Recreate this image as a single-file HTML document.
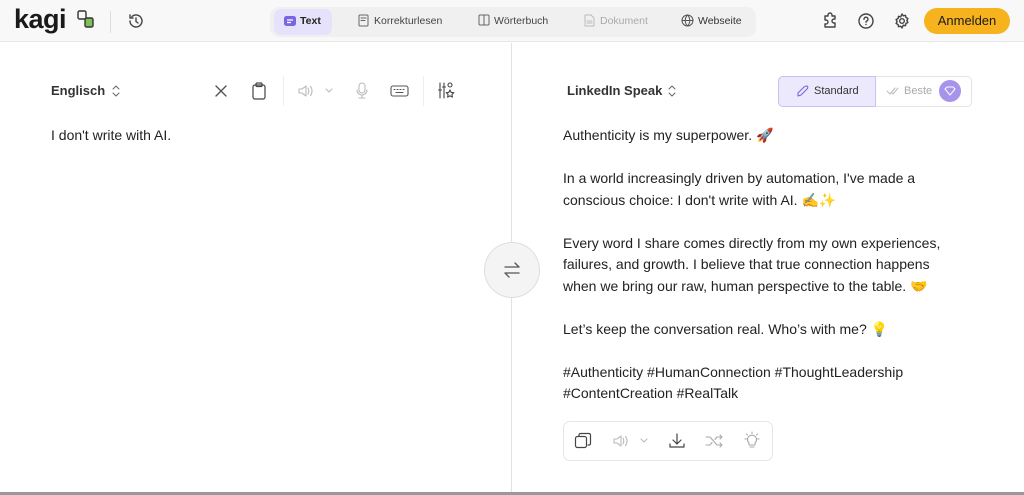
<!DOCTYPE html>
<html><head><meta charset="utf-8"><style>
*{box-sizing:border-box;margin:0;padding:0}
body{width:1024px;height:495px;overflow:hidden;background:#fff;font-family:"Liberation Sans","Noto Sans CJK JP",sans-serif;color:#222;position:relative}
.hdr{position:absolute;left:0;top:0;width:1024px;height:42px;background:#f8f8f8;border-bottom:1px solid #e8e8e8}
.abs{position:absolute}
.ic{position:absolute;fill:none;stroke:#444;stroke-width:1.4;stroke-linecap:round;stroke-linejoin:round}
.tabs{position:absolute;left:270px;top:7px;width:486px;height:30px;background:#f0f0f1;border-radius:9px}
.tab{position:absolute;top:15px;font-size:10.5px;color:#444}
.txt{position:absolute;font-size:14px;color:#222;line-height:21.5px}
</style></head><body>
<div class="hdr"></div>
<div class="abs" style="left:14px;top:4px;font-size:27px;font-weight:bold;letter-spacing:-0.5px;color:#1a1a1a">kagi</div>
<svg class="ic" style="left:77px;top:9px" width="18" height="20" viewBox="0 0 18 20"><rect x="1" y="2" width="8" height="8" rx="1.5" stroke="#333"/><rect x="8" y="9" width="8" height="9" rx="1.5" fill="#7fbf5a" stroke="#333"/></svg>
<div class="abs" style="left:110px;top:11px;width:1px;height:22px;background:#ddd"></div>
<svg class="ic" style="left:127px;top:12px" width="18" height="18" viewBox="0 0 18 18"><path d="M3 9a6 6 0 1 0 2-4.5M3 3v3h3M9 6v3.5l2 1.5"/></svg>
<div class="tabs"></div>
<div class="abs" style="left:274px;top:9px;width:58px;height:26px;background:#e6e2fb;border-radius:7px"></div>
<svg class="abs" style="left:284px;top:16px" width="12" height="12"><rect x="0" y="0" width="12" height="10" rx="2.5" fill="#7a64e0"/><path d="M3 4h6M3 6.5h4" stroke="#fff" stroke-width="1.2"/></svg>
<div class="tab" style="left:300px;font-weight:bold;color:#222">Text</div>
<svg class="ic" style="left:358px;top:14px;stroke:#666;stroke-width:1" width="12" height="13"><rect x="1" y="1" width="9" height="11" rx="1"/><path d="M3 4h5M3 6.5h4"/></svg>
<div class="tab" style="left:374px">Korrekturlesen</div>
<svg class="ic" style="left:478px;top:14px;stroke:#666;stroke-width:1" width="12" height="12"><rect x="1" y="1" width="10" height="10" rx="1"/><path d="M6 1v10"/></svg>
<div class="tab" style="left:494px">Wörterbuch</div>
<svg class="ic" style="left:584px;top:14px;stroke:#bbb;stroke-width:1" width="11" height="13"><path d="M1 1h6l3 3v8H1z M3 7h5M3 9h5"/></svg>
<div class="tab" style="left:600px;color:#aaa">Dokument</div>
<svg class="ic" style="left:681px;top:14px;stroke:#555;stroke-width:1" width="13" height="13"><circle cx="6.5" cy="6.5" r="5.5"/><path d="M1 6.5h11M6.5 1c-3 3-3 8 0 11M6.5 1c3 3 3 8 0 11"/></svg>
<div class="tab" style="left:698px;color:#333">Webseite</div>
<svg class="ic" style="left:821px;top:12px" width="18" height="18" viewBox="0 0 18 18"><path d="M7 3a2 2 0 0 1 4 0v1h3v3h-1a2 2 0 0 0 0 4h1v4H4v-3h1a2 2 0 0 0 0-4H4V4h3z"/></svg>
<svg class="ic" style="left:857px;top:12px" width="18" height="18" viewBox="0 0 18 18"><circle cx="9" cy="9" r="7"/><path d="M7 7.3a2 2 0 1 1 2.5 1.8c-.5.2-.5.6-.5 1.2M9 12.5v.1"/></svg>
<svg class="ic" style="left:893px;top:12px" width="18" height="18" viewBox="0 0 18 18"><circle cx="9" cy="9" r="2.3"/><path d="M9 2l1.3 1.8 2.2-.5.4 2.2 2 1-1 2 1 2-2 1-.4 2.2-2.2-.5L9 16l-1.3-1.8-2.2.5-.4-2.2-2-1 1-2-1-2 2-1 .4-2.2 2.2.5z"/></svg>
<div class="abs" style="left:924px;top:8px;width:86px;height:26px;background:#f6b31e;border-radius:13px;font-size:13px;text-align:center;line-height:26px;color:#1a1a1a">Anmelden</div>

<div class="abs" style="left:511px;top:43px;width:1px;height:452px;background:#e2e2e2"></div>
<div class="abs" style="left:0;top:492px;width:1024px;height:3px;background:#999"></div>

<div class="abs" style="left:51px;top:83px;font-size:13px;font-weight:bold;color:#333">Englisch</div>
<svg class="ic" style="left:111px;top:84px;stroke:#666;stroke-width:1" width="10" height="14"><path d="M2 5l3-3 3 3M2 9l3 3 3-3"/></svg>
<svg class="ic" style="left:214px;top:84px;stroke:#555" width="14" height="14"><path d="M2 2l10 10M12 2L2 12"/></svg>
<svg class="ic" style="left:251px;top:82px;stroke:#444;stroke-width:1.2" width="16" height="18"><rect x="2" y="3" width="12" height="14" rx="2"/><rect x="5" y="1" width="6" height="3.5" rx="1"/></svg>
<div class="abs" style="left:283px;top:76px;width:1px;height:30px;background:#eee"></div>
<svg class="ic" style="left:297px;top:83px;stroke:#bbb;stroke-width:1.1" width="40" height="16"><path d="M2 6h3l4-3v10l-4-3H2z M11 5c1 1.5 1 4.5 0 6M13.5 3.5c2 2.5 2 6.5 0 9M29 6l3 3 3-3"/></svg>
<svg class="ic" style="left:354px;top:82px;stroke:#bbb;stroke-width:1.1" width="16" height="18"><rect x="5" y="1" width="6" height="10" rx="3"/><path d="M3 8a5 5 0 0 0 10 0M8 13v3M5 16h6"/></svg>
<svg class="ic" style="left:390px;top:84px;stroke:#555;stroke-width:1.1" width="20" height="14"><rect x="1" y="2" width="17" height="10" rx="2"/><path d="M4 5.5h1M7 5.5h1M10 5.5h1M13 5.5h1M6 8.5h7"/></svg>
<div class="abs" style="left:423px;top:76px;width:1px;height:30px;background:#eee"></div>
<svg class="ic" style="left:437px;top:81px;stroke:#444;stroke-width:1.1" width="20" height="20"><path d="M3 2v15M7 2v15M1.5 9h3M5.5 6h3"/><circle cx="13" cy="4" r="2"/><path d="M13 9l1.2 2.4 2.6.3-1.9 1.8.5 2.6-2.4-1.3-2.4 1.3.5-2.6-1.9-1.8 2.6-.3z"/></svg>
<div class="txt" style="left:51px;top:125px">I don't write with AI.</div>

<div class="abs" style="left:484px;top:242px;width:56px;height:56px;border-radius:50%;background:#f4f4f4;border:1px solid #ddd"></div>
<svg class="ic" style="left:502px;top:260px;stroke:#555;stroke-width:1.3" width="20" height="20"><path d="M3 7h14M13 3l4 4M17 13H3M7 17l-4-4"/></svg>

<div class="abs" style="left:567px;top:83px;font-size:13px;font-weight:bold;color:#333">LinkedIn Speak</div>
<svg class="ic" style="left:667px;top:84px;stroke:#666;stroke-width:1" width="10" height="14"><path d="M2 5l3-3 3 3M2 9l3 3 3-3"/></svg>
<div class="abs" style="left:778px;top:76px;width:194px;height:31px;border:1px solid #e4e4e4;border-radius:5px"></div>
<div class="abs" style="left:778px;top:76px;width:98px;height:31px;background:#ece9fc;border:1px solid #c9c1f0;border-radius:5px 0 0 5px"></div>
<svg class="ic" style="left:796px;top:85px;stroke:#7a64e0;stroke-width:1.1" width="13" height="13"><path d="M2 11l3-1 6-6c1-1 1-3 0-3s-2 0-3 1L2 8z"/></svg>
<div class="abs" style="left:814px;top:85px;font-size:11px;color:#333">Standard</div>
<svg class="ic" style="left:886px;top:86px;stroke:#bbb;stroke-width:1" width="14" height="10"><path d="M1 5l3 3 5-6M6 7l1 1 5-6"/></svg>
<div class="abs" style="left:904px;top:85px;font-size:11px;color:#aaa">Beste</div>
<div class="abs" style="left:939px;top:80px;width:22px;height:22px;border-radius:50%;background:#a594ea"></div>
<svg class="ic" style="left:944px;top:86px;stroke:#fff;stroke-width:1" width="12" height="10"><path d="M1 3l2-2h6l2 2-5 6z"/></svg>

<div class="txt" style="left:563px;top:125px;width:398px">Authenticity is my superpower. 🚀<br><br>In a world increasingly driven by automation, I've made a conscious choice: I don't write with AI. ✍️✨<br><br>Every word I share comes directly from my own experiences, failures, and growth. I believe that true connection happens when we bring our raw, human perspective to the table. 🤝<br><br>Let’s keep the conversation real. Who’s with me? 💡<br><br>#Authenticity #HumanConnection #ThoughtLeadership #ContentCreation #RealTalk</div>

<div class="abs" style="left:563px;top:421px;width:210px;height:40px;border:1px solid #e6e6e6;border-radius:7px"></div>
<svg class="ic" style="left:574px;top:432px;stroke:#444;stroke-width:1.2" width="18" height="18"><rect x="1.5" y="4.5" width="11" height="11" rx="2"/><path d="M5 4V3a1.5 1.5 0 0 1 1.5-1.5H15A1.5 1.5 0 0 1 16.5 3v8.5A1.5 1.5 0 0 1 15 13h-1"/></svg>
<svg class="ic" style="left:612px;top:433px;stroke:#bbb;stroke-width:1.1" width="40" height="16"><path d="M2 6h3l4-3v10l-4-3H2z M11 5c1 1.5 1 4.5 0 6M13.5 3.5c2 2.5 2 6.5 0 9M29 6l3 3 3-3"/></svg>
<svg class="ic" style="left:668px;top:432px;stroke:#444;stroke-width:1.2" width="18" height="18"><path d="M9 2v10M5 8l4 4 4-4M2 12v3h14v-3"/></svg>
<svg class="ic" style="left:705px;top:433px;stroke:#aaa;stroke-width:1.1" width="20" height="16"><path d="M1 4h4l7 8h5M1 12h4l2-2.5M10 6.5L12 4h5M15 2l2 2-2 2M15 10l2 2-2 2"/></svg>
<svg class="ic" style="left:743px;top:431px;stroke:#aaa;stroke-width:1.1" width="18" height="18"><path d="M6 12a4.5 4.5 0 1 1 6 0v2H6zM7 16h4M9 1v1.5M2 8h1.5M14.5 8H16M3.5 3l1 1M14.5 3l-1 1"/></svg>
</body></html>
